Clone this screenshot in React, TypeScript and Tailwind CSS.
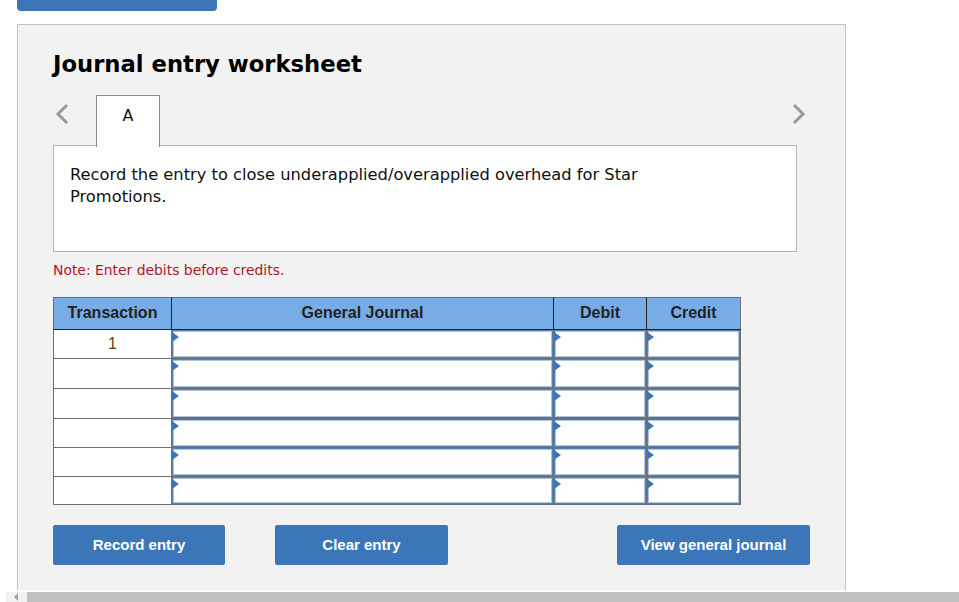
const rows = ["1", "", "", "", "", ""]
const rowHeights = ["h-[29px]", "h-[30px]", "h-[30px]", "h-[29px]", "h-[29px]", "h-[28px]"]

const Chevron = ({ flip }: { flip?: boolean }) => (
  <svg width="14" height="22" viewBox="0 0 14 22" className={flip ? "rotate-180" : ""}>
    <path d="M12 2 L3 11 L12 20" fill="none" stroke="#999999" strokeWidth="3" />
  </svg>
)

const EntryCell = ({ row }: { row: number }) => (
  <td className="relative p-0 border-l border-l-[#6f6f6f] border-b border-b-[#6f6f6f]">
    <div
      className={`h-full bg-white border border-[#5a7fa8] ${row === 2 ? "border-b-[#3b76b9]" : ""} ${row === 3 ? "border-t-[#3b76b9]" : ""}`}
    >
      <div className="h-full border border-[#a9c6e8]" />
    </div>
    <span className="absolute left-0 top-[2px] w-0 h-0 border-y-[5px] border-y-transparent border-l-[7px] border-l-[#3b76b9]" />
  </td>
)

export default function App() {
  return (
    <div className="h-[602px] w-[959px] overflow-hidden bg-white relative font-['DejaVu_Sans',sans-serif]">
      <div className="ml-[17px] w-[200px] h-[11px] bg-[#3b76b9] rounded-b-[4px]" />

      <div className="ml-[17px] mt-[13px] w-[829px] h-[566px] border border-[#c4c4c4] border-b-0 bg-[#f2f2f2] pl-[35px] pr-[48px]">
        <h1 className="mt-[23px] h-[32px] text-[22.7px] leading-[32px] font-bold text-black">Journal entry worksheet</h1>

        <div className="mt-[15px] flex h-[52px] justify-between -mr-[9px]">
          <div className="flex">
            <div className="w-[43px] pt-[8px] pl-[2px]">
              <Chevron />
            </div>
            <div className="relative z-10 w-[64px] h-[52px] bg-white border border-b-0 border-[#8a8a8a] text-center text-[16px] leading-[40px] text-[#111]">
              A
            </div>
          </div>
          <div className="pt-[8px]">
            <Chevron flip />
          </div>
        </div>

        <div className="-mt-[2px] w-[744px] h-[107px] bg-white border border-[#b5b5b5] pl-[16px] pt-[18px] pr-[140px] text-[16.3px] leading-[22px] text-[#111]">
          Record the entry to close underapplied/overapplied overhead for Star Promotions.
        </div>

        <p className="mt-[8px] h-[20px] text-[13.9px] leading-[20px] text-[#b0142c]">Note: Enter debits before credits.</p>

        <table className="mt-[17px] w-[687px] h-[207px] table-fixed border-collapse border border-[#6f6f6f] font-['Liberation_Sans',sans-serif] text-[16px] text-[#222]">
          <colgroup>
            <col className="w-[118px]" />
            <col className="w-[382px]" />
            <col className="w-[93px]" />
            <col className="w-[94px]" />
          </colgroup>
          <thead>
            <tr className="h-[32px] bg-[#78ace6] border-b border-b-[#222] font-bold">
              <th className="p-0 pb-[2px] font-bold">Transaction</th>
              <th className="p-0 pb-[2px] font-bold border-l border-l-[#222]">General Journal</th>
              <th className="p-0 pb-[2px] font-bold border-l border-l-[#222]">Debit</th>
              <th className="p-0 pb-[2px] font-bold border-l border-l-[#222]">Credit</th>
            </tr>
          </thead>
          <tbody>
            {rows.map((value, i) => (
              <tr key={i} className={`${rowHeights[i]} bg-white`}>
                <td className="p-0 text-center text-[#5a4326] border-b border-b-[#6f6f6f]">{value}</td>
                <EntryCell row={i} />
                <EntryCell row={i} />
                <EntryCell row={i} />
              </tr>
            ))}
          </tbody>
        </table>

        <div className="mt-[20px] flex font-['Liberation_Sans',sans-serif] text-[15px] font-bold text-white">
          <button className="shrink-0 w-[172px] h-[40px] pt-[1px] bg-[#3b76b9] rounded-[2px]">Record entry</button>
          <button className="shrink-0 ml-[50px] w-[173px] h-[40px] pt-[1px] bg-[#3b76b9] rounded-[2px]">Clear entry</button>
          <button className="shrink-0 ml-[169px] w-[193px] h-[40px] pt-[1px] bg-[#3b76b9] rounded-[2px]">View general journal</button>
        </div>
      </div>

      <div className="mt-[2px] flex h-[10px] ml-[6px] bg-[#f1f1f1]">
        <div className="w-[21px] flex items-end pl-[8px] pb-[1px]">
          <span className="w-0 h-0 border-y-[4px] border-y-transparent border-r-[4px] border-r-[#a3a3a3]" />
        </div>
        <div className="flex-1 bg-[#c0c0c0]" />
      </div>
    </div>
  )
}
